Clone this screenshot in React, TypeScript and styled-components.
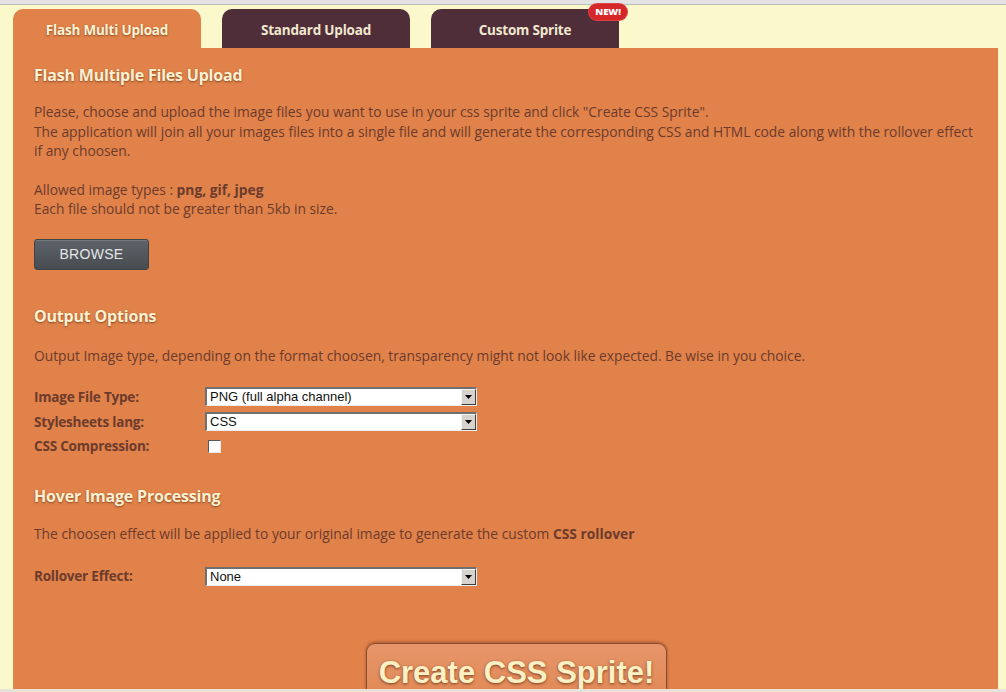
import styled, { createGlobalStyle } from 'styled-components';

const GlobalStyle = createGlobalStyle`
  html, body {
    margin: 0;
    padding: 0;
    background: #fbf8cc;
    overflow: hidden;
  }
`;

const Frame = styled.div`
  width: 1006px;
  height: 692px;
  display: flex;
  flex-direction: column;
  background: #fbf8cc;
  overflow: hidden;
  font-family: "Open Sans", Lato, sans-serif;
`;

const TopStrip = styled.div`
  height: 4px;
  flex: none;
  background: #e3e3e3;
  border-bottom: 1px solid #b9b9b9;
`;

const Page = styled.div`
  flex: 1;
  display: flex;
  flex-direction: column;
  padding: 4px 8px 0 13px;
  min-height: 0;
`;

const TabRow = styled.div`
  display: flex;
  gap: 21px;
  height: 39px;
  flex: none;
`;

const Tab = styled.div<{ $active?: boolean }>`
  position: relative;
  width: 188px;
  display: flex;
  align-items: center;
  justify-content: center;
  padding-top: 2px;
  box-sizing: border-box;
  border-radius: 10px 10px 0 0;
  background: ${p => (p.$active ? '#e0824a' : '#4f2e3a')};
  color: ${p => (p.$active ? '#fdf3d6' : '#f2e8cf')};
  font-weight: 700;
  font-size: 13.5px;
  letter-spacing: -0.2px;
  text-shadow: ${p => (p.$active ? '0 1px 2px rgba(110,50,20,0.7)' : 'none')};
`;

const Badge = styled.span`
  position: absolute;
  top: -5px;
  right: -8px;
  background: #d5262a;
  color: #fff;
  font-size: 9.5px;
  font-weight: 800;
  padding: 2px 6px 3px;
  border-radius: 8px;
  line-height: 11px;
  letter-spacing: 0;
  box-shadow: 0 0 0 1px #e04040;
`;

const Panel = styled.div`
  flex: 1;
  background: #e0824a;
  padding: 17px 21px 0 21px;
  display: flex;
  flex-direction: column;
  min-height: 0;
`;

const Heading = styled.h2`
  margin: 0;
  font-size: 16px;
  font-weight: 700;
  letter-spacing: -0.2px;
  color: #fcf1d2;
  text-shadow: 0 1px 2px rgba(110, 50, 20, 0.75);
  line-height: 20px;
`;

const Text = styled.p<{ $mt?: number }>`
  margin: ${p => p.$mt ?? 0}px 0 0;
  font-size: 13.8px;
  line-height: 19.5px;
  color: #6d3b2c;
`;

const Strong = styled.b`
  font-weight: 700;
`;

const BrowseButton = styled.button`
  margin-top: 20px;
  align-self: flex-start;
  width: 115px;
  height: 31px;
  border: 1px solid #3f4347;
  border-radius: 3px;
  background: linear-gradient(#5d6368, #474c51);
  color: #e4e6e8;
  font-family: "Liberation Sans", Arial, sans-serif;
  font-size: 14px;
  letter-spacing: 0.3px;
  box-shadow: inset 0 1px 0 rgba(255, 255, 255, 0.15);
`;

const Section = styled.div<{ $mt: number }>`
  margin-top: ${p => p.$mt}px;
  display: flex;
  flex-direction: column;
`;

const Form = styled.div<{ $mt: number }>`
  margin-top: ${p => p.$mt}px;
  display: grid;
  grid-template-columns: 171px 272px;
  row-gap: 6px;
  align-items: center;
`;

const Label = styled.span`
  font-size: 13.5px;
  font-weight: 700;
  letter-spacing: -0.2px;
  color: #6d3b2c;
`;

const Select = styled.div`
  height: 19px;
  box-sizing: border-box;
  display: flex;
  background: #fff;
  border-top: 2px solid #6f6f6f;
  border-left: 2px solid #6f6f6f;
  border-right: 1px solid #ececec;
  border-bottom: 1px solid #ececec;
`;

const SelectValue = styled.span`
  flex: 1;
  padding-left: 3px;
  font-family: "Liberation Sans", Arial, sans-serif;
  font-size: 13px;
  line-height: 16px;
  color: #111;
`;

const Arrow = styled.span`
  width: 15px;
  height: 16px;
  box-sizing: border-box;
  background: #d6d3ce;
  border-top: 1px solid #f4f4f4;
  border-left: 1px solid #f4f4f4;
  border-right: 1px solid #404040;
  border-bottom: 1px solid #404040;
  display: flex;
  align-items: center;
  justify-content: center;
`;

const Check = styled.span`
  width: 13px;
  height: 13px;
  box-sizing: border-box;
  background: #fff;
  border-top: 1px solid #5a5a5a;
  border-left: 1px solid #5a5a5a;
  border-right: 1px solid #e8e8e8;
  border-bottom: 1px solid #e8e8e8;
  margin-left: 3px;
`;

const CreateWrap = styled.div`
  margin-top: auto;
  display: flex;
  justify-content: center;
  padding-left: 22px;
`;

const CreateButton = styled.button`
  width: 301px;
  height: 52px;
  margin-bottom: -6px;
  border: 1px solid #8a4a33;
  border-bottom: none;
  border-radius: 9px 9px 0 0;
  background: linear-gradient(#e6956a, #e28a57);
  box-shadow: 0 -1px 3px rgba(90, 30, 10, 0.45);
  color: #fcf1c4;
  font-family: "Liberation Sans", Arial, sans-serif;
  font-weight: 700;
  font-size: 31px;
  padding: 6px 0 0;
  text-shadow: 0 1px 3px rgba(100, 40, 15, 0.8);
`;

const BottomStrip = styled.div`
  height: 3px;
  flex: none;
  background: #e8e2d8;
`;

const Dropdown = ({ value }: { value: string }) => (
  <Select>
    <SelectValue>{value}</SelectValue>
    <Arrow>
      <svg width="7" height="4" viewBox="0 0 7 4">
        <path d="M0 0h7L3.5 4z" fill="#000" />
      </svg>
    </Arrow>
  </Select>
);

export default function App() {
  return (
    <>
      <GlobalStyle />
      <Frame>
        <TopStrip />
        <Page>
          <TabRow>
            <Tab $active>Flash Multi Upload</Tab>
            <Tab>Standard Upload</Tab>
            <Tab>
              Custom Sprite
              <Badge>NEW!</Badge>
            </Tab>
          </TabRow>
          <Panel>
            <Heading>Flash Multiple Files Upload</Heading>
            <Text $mt={17}>
              Please, choose and upload the image files you want to use in your css sprite and click "Create CSS Sprite".
              <br />
              The application will join all your images files into a single file and will generate the corresponding CSS and HTML code along with the rollover effect if any choosen.
            </Text>
            <Text $mt={19}>
              Allowed image types : <Strong>png, gif, jpeg</Strong>
              <br />
              Each file should not be greater than 5kb in size.
            </Text>
            <BrowseButton>BROWSE</BrowseButton>

            <Section $mt={36}>
              <Heading>Output Options</Heading>
              <Text $mt={20}>
                Output Image type, depending on the format choosen, transparency might not look like expected. Be wise in you choice.
              </Text>
              <Form $mt={22}>
                <Label>Image File Type:</Label>
                <Dropdown value="PNG (full alpha channel)" />
                <Label>Stylesheets lang:</Label>
                <Dropdown value="CSS" />
                <Label>CSS Compression:</Label>
                <Check />
              </Form>
            </Section>

            <Section $mt={31}>
              <Heading>Hover Image Processing</Heading>
              <Text $mt={18}>
                The choosen effect will be applied to your original image to generate the custom <Strong>CSS rollover</Strong>
              </Text>
              <Form $mt={23}>
                <Label>Rollover Effect:</Label>
                <Dropdown value="None" />
              </Form>
            </Section>

            <CreateWrap>
              <CreateButton>Create CSS Sprite!</CreateButton>
            </CreateWrap>
          </Panel>
        </Page>
        <BottomStrip />
      </Frame>
    </>
  );
}
